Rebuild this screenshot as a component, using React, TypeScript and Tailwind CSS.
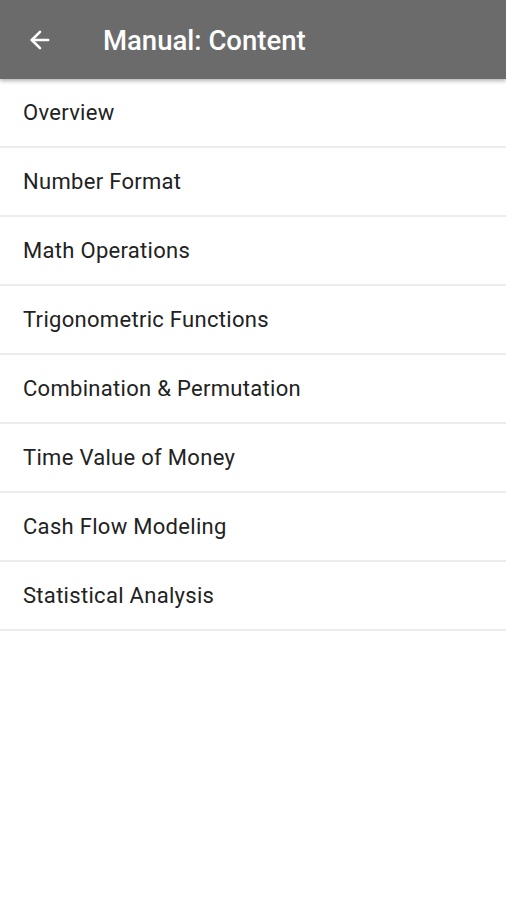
import { ArrowLeft } from 'lucide-react';

const ITEMS = [
  'Overview',
  'Number Format',
  'Math Operations',
  'Trigonometric Functions',
  'Combination & Permutation',
  'Time Value of Money',
  'Cash Flow Modeling',
  'Statistical Analysis',
];

export default function App() {
  return (
    <div className="min-h-[900px] w-full bg-white font-['Roboto',sans-serif]">
      <header className="relative z-10 flex h-[79px] items-center bg-[#6b6b6b] shadow-[0_2px_4px_rgba(0,0,0,0.3)]">
        <button type="button" className="ml-[26px] flex h-7 w-7 items-center justify-center text-white">
          <ArrowLeft className="h-7 w-7" strokeWidth={2.2} />
        </button>
        <h1 className="ml-[49px] mt-[3px] text-[27.5px] font-medium text-white">Manual: Content</h1>
      </header>

      <ul>
        {ITEMS.map((item) => (
          <li
            key={item}
            className="flex h-[69px] items-center border-b-2 border-[#ececec] pl-[23px] text-[22px] tracking-[0.3px] text-[#222]"
          >
            {item}
          </li>
        ))}
      </ul>
    </div>
  );
}
